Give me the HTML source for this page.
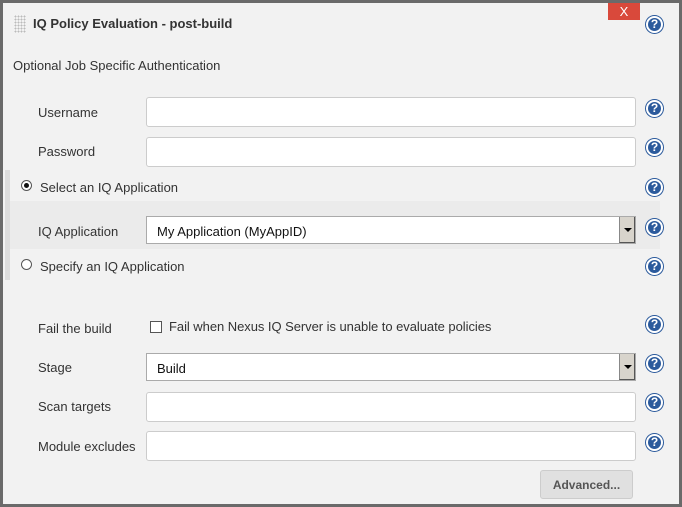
<!DOCTYPE html>
<html><head><style>
*{margin:0;padding:0;box-sizing:border-box}
body{width:682px;height:507px;background:#6a6a6a;position:relative;overflow:hidden;font-family:"Liberation Sans",Arial,sans-serif;font-size:13px;color:#333}
.pane{position:absolute;left:3px;top:3px;width:676px;height:501px;background:#f2f2f2}
.a{position:absolute}
.lbl{position:absolute;left:38px;font-size:13px;color:#333}
.inp{position:absolute;left:146px;width:490px;height:30px;background:#fff;border:1px solid #ccc;border-radius:3px}
.sel{position:absolute;left:146px;width:490px;height:28px;background:#fff;border:1px solid #aaa;font-size:13px;color:#111;padding:7px 0 0 10px}
.sel .b{position:absolute;right:0;top:0;width:16px;height:26px;background:#d8d4cc;border-left:1px solid #888;border-right:1px solid #555;border-bottom:1px solid #555}
.sel .b:after{content:"";position:absolute;left:4px;top:11px;border-left:4px solid transparent;border-right:4px solid transparent;border-top:4px solid #000}
.h{position:absolute;left:646px;width:17px;height:17px;border-radius:50%;background:#2b5a9c;border:2px solid #fff;box-shadow:0 0 0 1px #2b5a9c;color:#fff;font:bold 12px "Liberation Sans",sans-serif;text-align:center;line-height:13px}
.radio{position:absolute;width:11px;height:11px;border-radius:50%;border:1px solid #555;background:#fff}
</style></head><body>
<div class="pane"></div>
<div class="a" style="left:14px;top:15px;width:12px;height:18px;background-image:radial-gradient(#bbb 40%,transparent 41%);background-size:3px 3px"></div>
<div class="a" style="left:33px;top:16px;font-weight:bold;font-size:13px;color:#333">IQ Policy Evaluation - post-build</div>
<div class="a" style="left:608px;top:3px;width:32px;height:17px;background:#d9493b;color:#fff;font-size:13px;text-align:center;line-height:17px">X</div>
<div class="h" style="top:16px">?</div>
<div class="a" style="left:13px;top:58px">Optional Job Specific Authentication</div>

<div class="lbl" style="top:105px">Username</div>
<div class="inp" style="top:97px"></div>
<div class="h" style="top:100px">?</div>
<div class="lbl" style="top:144px">Password</div>
<div class="inp" style="top:137px"></div>
<div class="h" style="top:139px">?</div>

<div class="a" style="left:5px;top:170px;width:5px;height:110px;background:#dcdcdc"></div>
<div class="a" style="left:10px;top:201px;width:650px;height:48px;background:#ebebeb"></div>
<div class="radio" style="left:21px;top:180px"></div><div class="a" style="left:24px;top:183px;width:5px;height:5px;border-radius:50%;background:#111"></div>
<div class="a" style="left:40px;top:180px">Select an IQ Application</div>
<div class="h" style="top:179px">?</div>
<div class="lbl" style="top:224px">IQ Application</div>
<div class="sel" style="top:216px">My Application (MyAppID)<div class="b"></div></div>
<div class="h" style="top:219px">?</div>
<div class="radio" style="left:21px;top:259px"></div>
<div class="a" style="left:40px;top:259px">Specify an IQ Application</div>
<div class="h" style="top:258px">?</div>

<div class="lbl" style="top:321px">Fail the build</div>
<div class="a" style="left:150px;top:321px;width:12px;height:12px;border:1px solid #555;background:#fff"></div>
<div class="a" style="left:169px;top:319px;letter-spacing:-0.05px">Fail when Nexus IQ Server is unable to evaluate policies</div>
<div class="h" style="top:316px">?</div>
<div class="lbl" style="top:360px">Stage</div>
<div class="sel" style="top:353px">Build<div class="b"></div></div>
<div class="h" style="top:355px">?</div>
<div class="lbl" style="top:399px">Scan targets</div>
<div class="inp" style="top:392px"></div>
<div class="h" style="top:394px">?</div>
<div class="lbl" style="top:439px">Module excludes</div>
<div class="inp" style="top:431px"></div>
<div class="h" style="top:434px">?</div>
<div class="a" style="left:540px;top:470px;width:93px;height:29px;background:#e0e0e0;border:1px solid #ccc;border-radius:3px;font-weight:bold;font-size:12px;color:#555;text-align:center;line-height:28px">Advanced...</div>
</body></html>
